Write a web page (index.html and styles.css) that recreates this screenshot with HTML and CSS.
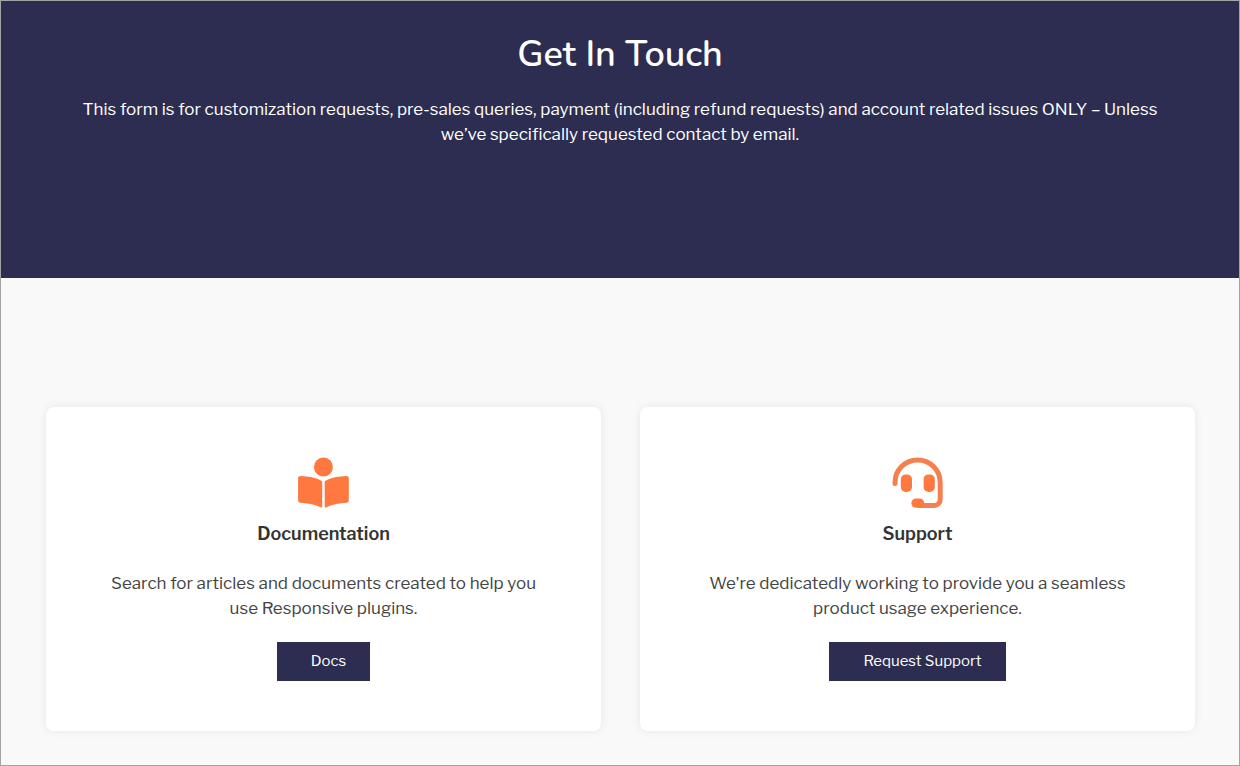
FILE: index.html
```html
<!DOCTYPE html>
<html lang="en">
  <head>
    <meta charset="UTF-8" />
    <meta name="viewport" content="width=device-width, initial-scale=1.0" />
    <title>Get In Touch</title>
    <link rel="stylesheet" href="styles.css">
  </head>
  <body>
    <header class="hero">
      <h1 class="hero-title">Get In Touch</h1>
      <p class="hero-text">
        This form is for customization requests, pre-sales queries, payment
        (including refund requests) and account related issues ONLY – Unless
        we’ve specifically requested contact by email.
      </p>
    </header>

    <main class="cards">
      <section class="card">
        <svg class="card-icon" viewBox="0 0 52 52" aria-hidden="true">
          <circle cx="25.4" cy="10" r="9.5" />
          <path d="M24.2 24.2C18 20.7 10 19.4 2.5 19.1C1.1 19 .1 20 .1 21.3V43.5C.1 44.8 1.1 45.7 2.4 45.8C9 46.2 17 47.3 22.9 50.4C23.6 50.8 24.2 50.4 24.2 49.7Z" />
          <path d="M26.7 24.2C32.9 20.7 40.9 19.4 48.4 19.1C49.8 19 50.8 20 50.8 21.3V43.5C50.8 44.8 49.8 45.7 48.5 45.8C41.9 46.2 33.9 47.3 28 50.4C27.3 50.8 26.7 50.4 26.7 49.7Z" />
        </svg>
        <h2 class="card-title">Documentation</h2>
        <p class="card-text">
          Search for articles and documents created to help you use Responsive
          plugins.
        </p>
        <a class="button" href="#docs">Docs</a>
      </section>

      <section class="card">
        <svg class="card-icon" viewBox="0 0 52 52" aria-hidden="true">
          <path class="headset-band" d="M3 26.5V25.5A22.6 22.6 0 0 1 48.2 25.5V42.5A6 6 0 0 1 42.2 48.5H28" />
          <rect x="8.8" y="17.4" width="11.2" height="17.6" rx="5" />
          <rect x="31.6" y="17.4" width="11.2" height="17.6" rx="5" />
          <rect x="19.4" y="41.4" width="12.8" height="9.4" rx="4.6" />
        </svg>
        <h2 class="card-title">Support</h2>
        <p class="card-text">
          We're dedicatedly working to provide you a seamless product usage
          experience.
        </p>
        <a class="button" href="#support">Request Support</a>
      </section>
    </main>
  </body>
</html>
```

FILE: styles.css
```css
* {
  box-sizing: border-box;
}
body {
  margin: 0;
  min-height: 100vh;
  border: 1px solid #a3a3a3;
  background: #f9f9f9;
  color: #444;
  font-family: "Libre Franklin", "Roboto", sans-serif;
  font-size: 17px;
  line-height: 25px;
  text-align: center;
}
.hero {
  padding: 31px 80px 131px;
  background: #2c2d51;
  color: #fff;
}
.hero-title {
  margin: 0 0 20px;
  font-family: "Nunito", "Nunito Sans", "Open Sans", sans-serif;
  font-size: 36px;
  font-weight: 600;
  line-height: 45px;
}
.hero-text {
  margin: 0;
}
.cards {
  display: grid;
  grid-template-columns: 1fr 1fr;
  gap: 39px;
  padding: 129px 44px 34px 45px;
}
.card {
  padding: 50px;
  border-radius: 8px;
  background: #fff;
  box-shadow: 0 0 10px rgba(0, 0, 0, 0.08);
}
.card-icon {
  display: block;
  width: 52px;
  height: 52px;
  margin: 0 auto 12px;
  fill: #ff7840;
}
.headset-band {
  fill: none;
  stroke: #f47f4f;
  stroke-width: 5;
  stroke-linecap: round;
}
.card-title {
  margin: 0 0 25px;
  color: #333;
  font-size: 18px;
  font-weight: 600;
  line-height: 25px;
}
.card-text {
  margin: 0 0 21px;
}
.button {
  display: inline-block;
  padding: 7px 24px 7px 34px;
  background: #2c2d51;
  color: #fff;
  font-size: 15px;
  text-decoration: none;
  vertical-align: top;
}
```
